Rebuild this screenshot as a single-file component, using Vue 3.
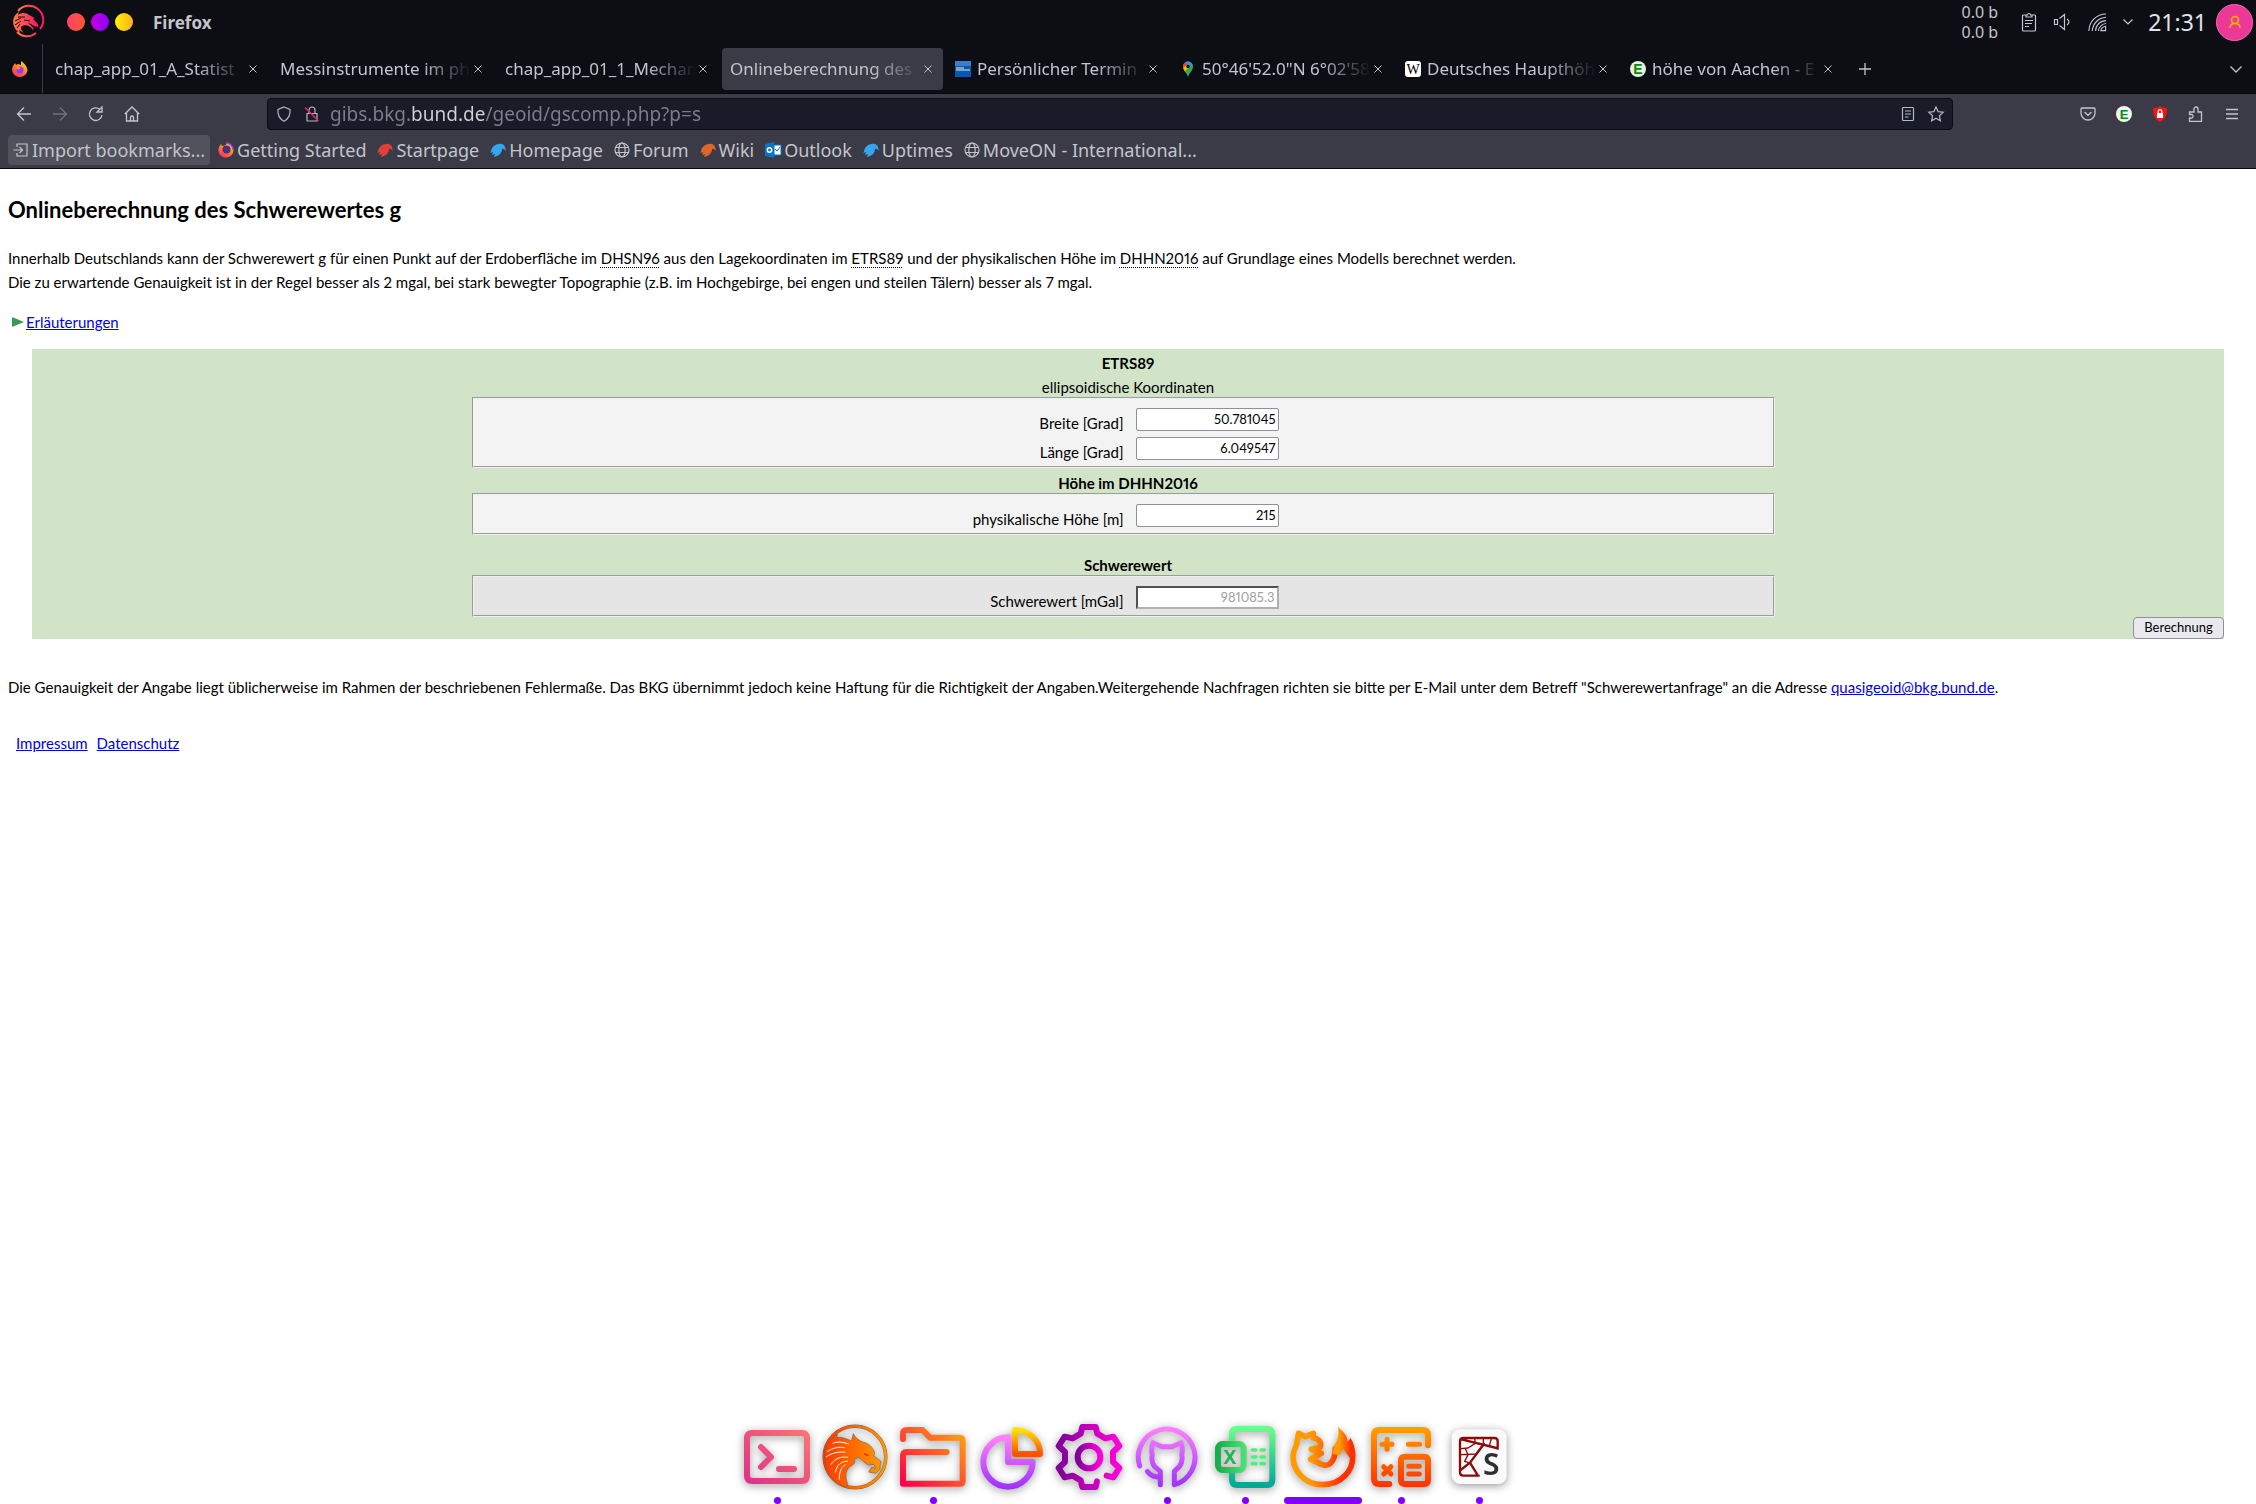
<script setup>
import { ref } from 'vue'

const tabs = [
  { title: 'chap_app_01_A_Statist' },
  { title: 'Messinstrumente im ph' },
  { title: 'chap_app_01_1_Mechan' },
  { title: 'Onlineberechnung des', active: true },
  { title: 'Persönlicher Termin', icon: 'card' },
  { title: '50°46\'52.0"N 6°02\'58', icon: 'pin' },
  { title: 'Deutsches Haupthöh', icon: 'wiki' },
  { title: 'höhe von Aachen - E', icon: 'eco' },
]

const bookmarks = [
  { label: 'Import bookmarks...', icon: 'import', raised: true },
  { label: 'Getting Started', icon: 'firefox' },
  { label: 'Startpage', icon: 'bird', color: '#e0403c' },
  { label: 'Homepage', icon: 'bird', color: '#35a5ee' },
  { label: 'Forum', icon: 'globe' },
  { label: 'Wiki', icon: 'bird', color: '#e0662c' },
  { label: 'Outlook', icon: 'outlook' },
  { label: 'Uptimes', icon: 'bird', color: '#35a5ee' },
  { label: 'MoveON - International...', icon: 'globe' },
]

const address = ref('gibs.bkg.bund.de/geoid/gscomp.php?p=s')
const breite = ref('50.781045')
const laenge = ref('6.049547')
const hoehe = ref('215')
const schwere = ref('981085.3')
</script>

<template>
  <div class="screen">
    <header class="system">
      <svg class="logo" viewBox="0 0 32 32">
        <defs>
          <linearGradient id="lg" x1="0" x2="1"><stop offset="0" stop-color="#ff7a45" /><stop offset="1" stop-color="#ff1560" /></linearGradient>
        </defs>
        <path d="M7 5A14 14 0 0 1 29 23M25 27A14 14 0 0 1 6 26" fill="none" stroke="url(#lg)" stroke-width="2" />
        <path d="M5 24C0 17 2 9 8 6L7 9C11 6 16 7 18 9L24 12L22 13L27 18L27 21L23 20L20 18L17 17C20 20 24 22 22 24C20 20 14 18 11 20C9 21 10 24 13 27L8 24L9 27Z" fill="url(#lg)" />
        <path d="M4 15L10 12M4 19L10 15M7 11L14 11M13 14L19 15M6 22L9 18" stroke="#0d0e14" stroke-width="1" />
      </svg>
      <div class="lights">
        <button class="light red" aria-label="Close"></button>
        <button class="light violet" aria-label="Minimise"></button>
        <button class="light yellow" aria-label="Maximise"></button>
      </div>
      <span class="appname">Firefox</span>
      <div class="tray">
        <div class="net"><span>0.0 b</span><span>0.0 b</span></div>
        <svg class="t-clip" viewBox="0 0 16 20"><path d="M5 3H2.500a1 1 0 0 0-1 1V18a1 1 0 0 0 1 1H13.500a1 1 0 0 0 1-1V4a1 1 0 0 0-1-1H11M5 5V3H6.500a1.500 1.500 0 0 1 3 0H11V5ZM4 8.500H12M4 11.500H11M4 14.500H8" /></svg>
        <svg class="t-sound" viewBox="0 0 18 18"><path d="M1.500 6.500H4.500V11.500H1.500ZM6.500 5.500L11.500 1.500V16.500L6.500 12.500M14 6Q18 9 14 12" /></svg>
        <svg class="t-wifi" viewBox="0 0 20 20"><path d="M1 19C1 9 9 1 19 1M4.500 19C5 11 11 5 19 4.500M8 19C8 13 13 8 19 8M11 19C11 15 15 11 19 11M13.500 18.500C14 16 16 14.500 18.500 14V18.500Z" /></svg>
        <svg class="t-chev" viewBox="0 0 12 8"><path d="M1.500 1.500L6 6L10.500 1.500" /></svg>
        <span class="clock">21:31</span>
        <span class="avatar"><svg viewBox="0 0 12 14"><circle cx="6" cy="5" r="3.500" /><path d="M1 13C1 10 3 8.500 6 8.500S11 10 11 13" /></svg></span>
      </div>
    </header>

    <nav class="tabstrip">
      <span class="pinned">
        <svg viewBox="0 0 16 16">
          <defs><linearGradient id="fx" x1="0.200" y1="1" x2="0.800" y2="0"><stop offset="0" stop-color="#ff2a6b" /><stop offset="0.500" stop-color="#ff7a2a" /><stop offset="1" stop-color="#ffe030" /></linearGradient></defs>
          <path d="M8 16A7.500 7.500 0 0 1 1 5L3 2L4 4L6 3L9 4V0C12 2 15 5 15.500 9A7.500 7.500 0 0 1 8 16Z" fill="url(#fx)" /><circle cx="8" cy="9" r="3.500" fill="#8a3df0" /><path d="M4 6C6 5 8 6 9 7L6 9Z" fill="#ff8a2a" />
        </svg>
      </span>
      <div v-for="t in tabs" :key="t.title" class="tab" :class="{ active: t.active }">
        <svg v-if="t.icon" class="fav" viewBox="0 0 16 16">
          <g v-if="t.icon === 'card'"><rect width="16" height="16" fill="#0b57a8" /><rect width="16" height="5" fill="#3c7cc8" /><path d="M1 7H9M1 9H15" stroke="#fff" stroke-width="1" opacity="0.900" /></g>
          <g v-else-if="t.icon === 'pin'"><path d="M8 16C7 12 3 10 3 5.500A5 5 0 0 1 13 5.500C13 10 9 12 8 16Z" fill="#34a853" /><path d="M3.200 7A5 5 0 0 1 5 1.500L8 5Z" fill="#ea4335" /><path d="M5 1.500A5 5 0 0 1 12.500 3.500L8 5.500Z" fill="#4285f4" /><path d="M3.200 7L6.500 4L8 7L5 10.500Z" fill="#fbbc04" /><circle cx="8" cy="5.500" r="1.700" fill="#111" /></g>
          <g v-else-if="t.icon === 'wiki'"><rect width="16" height="16" rx="3" fill="#fff" /><text x="8" y="13" text-anchor="middle" font-family="Liberation Serif, serif" font-size="14" fill="#000">W</text></g>
          <g v-else><circle cx="8" cy="8" r="8" fill="#e8f0e4" /><text x="8" y="13" text-anchor="middle" font-family="Liberation Sans, sans-serif" font-weight="bold" font-size="14" fill="#078a10">E</text></g>
        </svg>
        <button class="title">{{ t.title }}</button>
        <button class="close" aria-label="Close tab"><svg viewBox="0 0 8 8"><path d="M0.500 0.500L7.500 7.500M7.500 0.500L0.500 7.500" /></svg></button>
      </div>
      <button class="ib newtab" aria-label="New tab"><svg viewBox="0 0 12 12"><path d="M6 0V12M0 6H12" /></svg></button>
      <button class="ib alltabs" aria-label="List all tabs"><svg viewBox="0 0 12 12"><path d="M0.500 3.500L6 9L11.500 3.500" /></svg></button>
    </nav>

    <div class="toolbar">
      <div class="navbar">
        <div class="navbuttons">
          <button class="ib" aria-label="Back"><svg viewBox="0 0 16 16"><path d="M15 8H1.500M8 1.500L1.500 8L8 14.500" /></svg></button>
          <button class="ib dim" aria-label="Forward"><svg viewBox="0 0 16 16"><path d="M1 8H14.500M8 1.500L14.500 8L8 14.500" /></svg></button>
          <button class="ib" aria-label="Reload"><svg viewBox="0 0 16 16"><path d="M14 9A6.300 6.300 0 1 1 12 3.500M9 6H14V1Z" /></svg></button>
          <button class="ib" aria-label="Home"><svg viewBox="0 0 16 16"><path d="M0.800 8L8 1L15.200 8M2.500 6.500V15H13.500V6.500M6.500 15V11.500A1.500 1.500 0 0 1 9.500 11.500V15" /></svg></button>
        </div>
        <div class="urlbar">
          <svg class="u" viewBox="0 0 16 16"><path d="M8 1L14 3.500C14.500 8 13 12.500 8 15.200C3 12.500 1.500 8 2 3.500Z" /></svg>
          <svg class="u" viewBox="0 0 16 16"><path d="M3 7.500H13V15H3ZM5 7.500V4A3 3 0 0 1 11 4V7.500" /><path d="M1 1.500L14.500 15" stroke="#e22850" stroke-width="1.600" /></svg>
          <input v-model="address" class="address" type="text" aria-label="Address" />
          <svg class="u" viewBox="0 0 16 16"><path d="M3.500 1.500H12.500a1 1 0 0 1 1 1V13.500a1 1 0 0 1-1 1H3.500a1 1 0 0 1-1-1V2.500a1 1 0 0 1 1-1ZM5 5H11M5 8H11M5 11H8.500" /></svg>
          <svg class="u" viewBox="0 0 16 16"><path d="M8 1L10.100 5.600L15.200 6.200L11.400 9.700L12.400 14.800L8 12.300L3.600 14.800L4.600 9.700L0.800 6.200L5.900 5.600Z" /></svg>
        </div>
        <div class="extensions">
          <button class="ib" aria-label="Pocket"><svg viewBox="0 0 16 16"><path d="M2 2H14a1 1 0 0 1 1 1V7A7 7 0 0 1 1 7V3a1 1 0 0 1 1-1ZM4.500 6L8 9.300L11.500 6" /></svg></button>
          <button class="ib" aria-label="Ecosia"><svg viewBox="0 0 16 16"><circle cx="8" cy="8" r="8" fill="#f2f4ee" stroke="none" /><text x="8" y="13" text-anchor="middle" font-family="Liberation Sans, sans-serif" font-weight="bold" font-size="13" fill="#078a10" stroke="none">E</text></svg></button>
          <button class="ib" aria-label="Ad blocker"><svg viewBox="0 0 16 16"><path d="M8 0C10 1.500 13 2 15 2C15.500 9 13 13.500 8 16C3 13.500 0.500 9 1 2C3 2 6 1.500 8 0Z" fill="#f31414" stroke="none" /><rect x="5" y="7" width="6" height="5" fill="#fff" stroke="none" /><path d="M6.200 7V5.500A1.800 1.800 0 0 1 9.800 5.500V7" stroke="#fff" /></svg></button>
          <button class="ib" aria-label="Extensions"><svg viewBox="0 0 16 16"><path d="M1.500 6H6V3A2 2 0 0 1 10 3V6H13.500V15.300H1.500V12H4A2 2 0 0 0 4 8.500H1.500Z" /></svg></button>
          <button class="ib" aria-label="Menu"><svg viewBox="0 0 16 16"><path d="M2 3.500H14M2 8H14M2 12.500H14" /></svg></button>
        </div>
      </div>
      <div class="bookmarks">
        <a v-for="b in bookmarks" :key="b.label" href="#" class="bm" :class="{ raised: b.raised }">
          <svg viewBox="0 0 16 16">
            <g v-if="b.icon === 'import'" class="line"><path d="M4 5V2H14V14H4V11M0.500 8H9M6.500 5L9.500 8L6.500 11" /></g>
            <g v-else-if="b.icon === 'globe'" class="line"><circle cx="8" cy="8" r="7" /><ellipse cx="8" cy="8" rx="3.200" ry="7" /><path d="M1.500 5.500H14.500M1.500 10.500H14.500" /></g>
            <g v-else-if="b.icon === 'firefox'"><path d="M8 15.500A7.500 7.500 0 0 1 1 5L3 2L4 4L7 3.500L10 1C13 2 15.500 5 15.500 9A7.500 7.500 0 0 1 8 15.500Z" fill="url(#fx)" /><circle cx="8.500" cy="7.500" r="4" fill="#4a2e80" /><path d="M8 1A7 7 0 0 1 15 8" fill="none" stroke="#a03df0" stroke-width="1.500" /></g>
            <g v-else-if="b.icon === 'outlook'"><path d="M0 2L9 0V16L0 14Z" fill="#0a72c8" /><path d="M9 3H16V13H9Z" fill="#fff" stroke="#0a72c8" /><path d="M10 7L12 9L15 5" fill="none" stroke="#0a72c8" /><circle cx="4.500" cy="8" r="2.200" fill="none" stroke="#fff" stroke-width="1.500" /></g>
            <path v-else :fill="b.color" d="M1 9C2 5 5 2 9 2C13 1 16 4 15.500 9C14.500 7 13 6.500 12 7C12 11 9 14 4 15L5 12L2 13L3 10L0.500 11Z" />
          </svg>
          <span>{{ b.label }}</span>
        </a>
      </div>
    </div>

    <main class="page">
      <h1>Onlineberechnung des Schwerewertes g</h1>
      <p>
        Innerhalb Deutschlands kann der Schwerewert g für einen Punkt auf der Erdoberfläche im <abbr>DHSN96</abbr> aus den Lagekoordinaten im <abbr>ETRS89</abbr> und der physikalischen Höhe im <abbr>DHHN2016</abbr> auf Grundlage eines Modells berechnet werden.<br />
        Die zu erwartende Genauigkeit ist in der Regel besser als 2 mgal, bei stark bewegter Topographie (z.B. im Hochgebirge, bei engen und steilen Tälern) besser als 7 mgal.
      </p>
      <div class="explain">
        <svg viewBox="0 0 12 12"><path d="M0 1L12 6L0 11Z" fill="#3f9560" /></svg><a href="#">Erläuterungen</a>
      </div>

      <form class="calc" @submit.prevent>
        <h2>ETRS89</h2>
        <div class="sub">ellipsoidische Koordinaten</div>
        <div class="box">
          <div class="row"><label for="breite">Breite [Grad]</label><input id="breite" v-model="breite" type="text" /></div>
          <div class="row"><label for="laenge">Länge [Grad]</label><input id="laenge" v-model="laenge" type="text" /></div>
        </div>
        <h2>Höhe im DHHN2016</h2>
        <div class="box">
          <div class="row"><label for="hoehe">physikalische Höhe [m]</label><input id="hoehe" v-model="hoehe" type="text" /></div>
        </div>
        <h2 class="result-title">Schwerewert</h2>
        <div class="box grey">
          <div class="row"><label for="schwere">Schwerewert [mGal]</label><input id="schwere" v-model="schwere" class="result" type="text" disabled /></div>
        </div>
        <div class="actions"><button type="submit">Berechnung</button></div>
      </form>

      <p class="note">Die Genauigkeit der Angabe liegt üblicherweise im Rahmen der beschriebenen Fehlermaße. Das BKG übernimmt jedoch keine Haftung für die Richtigkeit der Angaben.Weitergehende Nachfragen richten sie bitte per E-Mail unter dem Betreff "Schwerewertanfrage" an die Adresse <a href="#">quasigeoid@bkg.bund.de</a>.</p>
      <div class="legal"><a href="#">Impressum</a><a href="#">Datenschutz</a></div>
    </main>

    <div class="dock">
      <button class="app run" aria-label="Terminal">
        <svg viewBox="0 0 198 198">
          <defs><linearGradient id="d1" x1="0" y1="1" x2="1" y2="0"><stop offset="0" stop-color="#e0308a" /><stop offset="1" stop-color="#fb7470" /></linearGradient></defs>
          <path stroke="url(#d1)" d="M25 27H173Q189 27 189 43V155Q189 171 173 171H25Q9 171 9 155V43Q9 27 25 27ZM51 69L81 99L51 129M105 135H150" />
        </svg>
      </button>
      <button class="app" aria-label="Dragon">
        <svg viewBox="-4 -4 206 206">
          <defs><linearGradient id="d2"><stop offset="0" stop-color="#ff3a00" /><stop offset="1" stop-color="#ff9800" /></linearGradient></defs>
          <circle cx="99" cy="99" r="96" stroke="#77604a" stroke-width="11" /><circle cx="99" cy="99" r="96" stroke="url(#d2)" stroke-width="8" />
          <path fill="url(#d2)" stroke="#77604a" stroke-width="2" d="M72 193C35 182 5 150 4 99C4 74 12 54 24 42L44 28L42 38C58 36 76 42 88 50L94 26C100 38 108 46 122 52C142 56 154 68 160 84L158 96L180 112L176 138L164 150L142 146L150 132L164 134L158 122L140 124C128 118 120 106 110 100L96 106C100 114 98 122 88 126C70 134 66 160 76 182Z" />
          <path stroke="#fff" stroke-width="3" d="M12 82C30 70 50 66 66 70M10 98C30 84 50 82 68 84M24 122C36 104 54 96 76 100M38 146C42 122 58 112 76 112M50 168C50 140 58 130 68 124M30 56C44 50 60 52 78 58" />
          <path stroke="#d21" stroke-width="4" d="M128 89L140 94" />
        </svg>
      </button>
      <button class="app run" aria-label="Files">
        <svg viewBox="0 0 198 198">
          <defs><linearGradient id="d3" x1="0" y1="1" x2="1" y2="0"><stop offset="0" stop-color="#ff0048" /><stop offset="1" stop-color="#ffa510" /></linearGradient></defs>
          <path stroke="url(#d3)" d="M9 45V30Q9 18 21 18H68L90 41H180Q188 41 188 50V170Q188 179 180 179H9V96Q9 84 20 84H140" />
        </svg>
      </button>
      <button class="app" aria-label="Disk usage">
        <svg viewBox="0 0 198 198">
          <defs><linearGradient id="d4" x1="0" y1="0" x2="0" y2="1"><stop offset="0" stop-color="#ff80ff" /><stop offset="1" stop-color="#a033ff" /></linearGradient><linearGradient id="d5" x1="0" y1="0" x2="0" y2="1"><stop offset="0" stop-color="#ffe000" /><stop offset="1" stop-color="#ff5000" /></linearGradient></defs>
          <path stroke="url(#d4)" d="M90 40A74 74 0 1 0 164 114H90Z" /><path stroke="url(#d5)" d="M111 19V90H186C186 50 155 19 111 19Z" />
        </svg>
      </button>
      <button class="app" aria-label="Settings">
        <svg viewBox="0 0 198 198">
          <defs><linearGradient id="d6"><stop offset="0" stop-color="#80009a" /><stop offset="1" stop-color="#ff00dc" /></linearGradient></defs>
          <path stroke="url(#d6)" d="M152 155L172 160L190 132L171 114V84L190 66L172 38L148 43L124 29L119 9H79L74 29L50 43L26 38L8 66L27 84V114L8 132L26 160L50 155L74 169L79 189H119L123 172" /><circle cx="99" cy="99" r="34" stroke="url(#d6)" />
        </svg>
      </button>
      <button class="app run" aria-label="GitHub">
        <svg viewBox="0 0 198 198">
          <path stroke="url(#d4)" stroke-width="15" d="M17 126A85 85 0 1 1 121 182V142L136 128Q148 112 143 92Q148 76 141 56L114 68H84L57 56Q50 76 55 92Q50 112 62 128L79 142V182M79 158Q56 162 40 142" />
        </svg>
      </button>
      <button class="app run" aria-label="Spreadsheet">
        <svg viewBox="0 0 198 198">
          <defs><linearGradient id="d7" x1="0" y1="0" x2="0" y2="1"><stop offset="0" stop-color="#66ff88" /><stop offset="1" stop-color="#00a896" /></linearGradient><linearGradient id="d8"><stop offset="0" stop-color="#14b04c" /><stop offset="1" stop-color="#48e070" /></linearGradient></defs>
          <path stroke="url(#d7)" d="M60 50V31Q60 15 76 15H165Q181 15 181 31V167Q181 183 165 183H76Q60 183 60 167V148" />
          <rect x="18" y="60" width="77" height="78" rx="14" stroke="url(#d8)" />
          <path stroke="#52f07a" stroke-width="11" d="M121 78H132M147 78H157M121 99H132M147 99H157M121 119H132M147 119H157" />
          <text x="54" y="120" text-anchor="middle" font-family="Noto Sans, sans-serif" font-weight="bold" font-size="58" fill="#1fb850">X</text>
        </svg>
      </button>
      <button class="app current" aria-label="Firefox">
        <svg viewBox="0 0 198 198">
          <defs><linearGradient id="d9"><stop offset="0.300" stop-color="#ff9a00" /><stop offset="0.800" stop-color="#ff3000" /></linearGradient></defs>
          <path stroke="url(#d9)" stroke-width="17" d="M187 90C194 140 152 182 98 182C40 182 2 134 11 84L20 60L26 28L46 38L70 28V42C88 44 96 58 90 70L64 76L94 88L62 106L84 116C116 138 136 110 136 74" />
          <path fill="url(#d9)" d="M144 8C166 28 174 40 172 54L182 42C196 66 200 92 192 116L178 100L166 84L160 74L148 94L128 90L132 64C144 50 148 34 144 8Z" />
        </svg>
      </button>
      <button class="app run" aria-label="Calculator">
        <svg viewBox="0 0 198 198">
          <defs><linearGradient id="d10" gradientUnits="userSpaceOnUse" x1="0" y1="10" x2="0" y2="190"><stop offset="0" stop-color="#ffa000" /><stop offset="1" stop-color="#ff3000" /></linearGradient></defs>
          <path stroke="url(#d10)" d="M180 64V34Q180 18 164 18H34Q18 18 18 34V164Q18 180 34 180H64M111 98H168Q180 98 180 110V168Q180 180 168 180H111Q99 180 99 168V110Q99 98 111 98Z" />
          <path stroke="url(#d10)" stroke-width="15" d="M57 46V76M42 61H72M121 61H155M47 128L69 150M69 128L47 150M122 127H154M122 150H154" />
        </svg>
      </button>
      <button class="app run" aria-label="Spyder">
        <svg viewBox="0 0 198 198">
          <rect x="17" y="16" width="165" height="164" rx="26" fill="#fafafa" />
          <path stroke="#8c0a0a" stroke-width="7" d="M155 74V52Q155 42 145 42H52Q42 42 42 52V145Q42 155 52 155H98M46 46L152 72M114 60L72 116L44 138M72 116L94 152" />
          <path stroke="#8c0a0a" stroke-width="4" d="M86 44L88 58L66 72L44 74M112 44V60L90 90L44 92M136 44L130 66M58 74L66 92L56 112L74 118" />
          <text x="136" y="154" text-anchor="middle" font-family="Noto Sans, sans-serif" font-weight="600" font-size="90" fill="#2f3033">S</text>
        </svg>
      </button>
    </div>
  </div>
</template>

<style>
body { background: #fff; }
</style>

<style scoped>
* { box-sizing: border-box; }
.screen { min-height: 100vh; font-family: "Noto Sans", sans-serif; font-size: 17px; color: #c3c5cc; }
button { font: inherit; color: inherit; background: none; border: 0; padding: 0; }
svg { display: block; flex: none; overflow: visible; }

.system { display: flex; align-items: center; height: 44px; padding: 0 3px 0 11px; background: #0d0e14; }
.logo { width: 32px; height: 32px; }
.lights { display: flex; gap: 6px; margin-left: 24px; }
.light { width: 18px; height: 18px; border-radius: 50%; }
.red { background: linear-gradient(90deg, #ff4468, #ff5530); }
.violet { background: linear-gradient(90deg, #c800dc, #8800ff); }
.yellow { background: linear-gradient(90deg, #fff000, #ffb020); }
.appname { margin-left: 20px; font-weight: 700; }
.tray { display: flex; align-items: center; margin-left: auto; stroke: #c3c5cc; }
.tray svg { fill: none; stroke-width: 1.200; }
.net { display: flex; flex-direction: column; margin-right: 23px; font-size: 16px; line-height: 20px; }
.t-clip { width: 16px; height: 20px; margin-right: 16px; }
.t-sound { width: 18px; height: 18px; margin-right: 17px; }
.t-wifi { width: 19px; height: 19px; margin-right: 15px; }
.t-chev { width: 12px; height: 8px; margin-right: 14px; }
.net, .clock { stroke: none; }
.clock { font-size: 23px; line-height: 32px; color: #dfe3ea; margin-right: 9px; }
.avatar { display: flex; align-items: center; justify-content: center; width: 37px; height: 37px; border-radius: 50%; background: #ec3899; border: 1px solid #f26ab4; }
.avatar svg { width: 12px; height: 14px; stroke: #ffb000; stroke-width: 1.600; }

.tabstrip { display: flex; align-items: center; gap: 4px; height: 50px; padding: 0 12px 0 0; background: #0d0e14; border-bottom: 1px solid #05060a; }
.pinned { display: flex; align-items: center; align-self: stretch; width: 43px; padding-left: 12px; border-right: 1px solid #3a3b46; }
.pinned svg { width: 16px; height: 16px; }
.tab { display: flex; align-items: center; flex: 0 1 221px; min-width: 0; height: 42px; padding: 0 11px 0 8px; border-radius: 4px; }
.tab.active { background: #3a3b46; }
.fav { width: 16px; height: 16px; margin-right: 6px; }
.title { flex: 1; min-width: 0; overflow: hidden; white-space: nowrap; text-align: left; mask-image: linear-gradient(90deg, #000 calc(100% - 50px), transparent); }
.close svg { width: 8px; height: 8px; margin-left: 3px; fill: none; stroke: #c3c5cc; }
.ib svg { fill: none; stroke: #c3c5cc; stroke-width: 1.300; width: 16px; height: 16px; }
.ib { display: flex; align-items: center; justify-content: center; width: 36px; height: 32px; flex: none; }
.newtab svg, .alltabs svg { width: 12px; height: 12px; }
.alltabs { width: 16px; margin-left: auto; }
.dim { opacity: 0.400; }

.toolbar { background: #3a3b46; padding: 4px 6px 3px; border-bottom: 1px solid #05060a; }
.navbar { display: flex; align-items: center; height: 32px; }
.navbuttons, .extensions { display: flex; flex: none; }
.urlbar { display: flex; align-items: center; flex: 1; min-width: 0; height: 32px; margin: 0 117px; padding: 0 8px; gap: 12px; background: #191c28; border: 1px solid #0b0c12; border-radius: 4px; }
.u { width: 16px; height: 16px; fill: none; stroke: #b4b7c0; stroke-width: 1.200; }
.address { flex: 1; min-width: 0; margin-left: -2px; padding: 0; border: 0; outline: 0; font: 19px "Noto Sans", sans-serif; color: transparent; background: linear-gradient(90deg, #7c7f8a 81px, #d0d2d8 81px, #d0d2d8 155px, #7c7f8a 155px); background-clip: text; -webkit-background-clip: text; }
.bookmarks { display: flex; align-items: center; gap: 1px; margin-top: 5px; padding-left: 2px; font-size: 18px; }
.bm { display: flex; align-items: center; gap: 3px; height: 30px; padding: 0 5px; border-radius: 4px; color: #c3c5cc; text-decoration: none; white-space: nowrap; }
.bm svg { width: 16px; height: 16px; }
.bm.raised { background: #50515b; margin-right: 2px; }
.line { fill: none; stroke: #c3c5cc; stroke-width: 1.200; }

.page { padding: 0 8px; font-family: Lato, sans-serif; font-size: 15px; line-height: 24px; font-variant-numeric: proportional-nums; color: #000; }
.page a { color: #0000ee; text-decoration: underline; }
h1 { margin: 25px 0 20px; font-size: 22px; line-height: 32px; font-weight: 700; }
p { margin: 0; }
abbr { text-decoration: underline dotted 1px; text-underline-offset: 3px; }
.explain { display: flex; align-items: center; gap: 2px; margin: 16px 0 15px; padding-left: 4px; }
.explain svg { width: 12px; height: 12px; }
.calc { margin: 0 24px; padding-top: 2px; background: #d1e4c8; text-align: center; }
h2 { margin: 0; font-size: 15px; line-height: 24px; font-weight: 700; }
.sub { height: 22px; }
.box { margin: 0 calc(20% + 11px) 0 calc(20% + 2px); padding: 9px 0 6px; display: flex; flex-direction: column; gap: 6px; border: 2px groove #f0f0f0; background: #f3f3f3; }
.box.grey { background: #e5e5e5; }
.box + h2 { padding-top: 3px; height: 25px; }
.box + .result-title { padding-top: 18px; height: 40px; }
.row { display: flex; gap: 12px; height: 23px; }
.row label { width: 50%; padding-top: 3px; text-align: right; }
.row input { width: 143px; height: 23px; padding: 0 2px 2px; border: 1px solid #8f8f9d; border-radius: 2px; background: #fff; font: 13px Lato, sans-serif; font-variant-numeric: proportional-nums; text-align: right; color: #000; }
.row .result { border: 2px solid; border-color: #505050 #b0b0b0 #b0b0b0 #505050; color: #a0a0a0; border-radius: 0; }
.actions { display: flex; justify-content: flex-end; }
.actions button { height: 22px; width: 91px; font-size: 13px; line-height: 18px; padding-bottom: 2px; background: #e9e9ed; border: 1px solid #8f8f9d; border-radius: 4px; color: #000; }
.note { margin-top: 36px; }
.legal { display: flex; gap: 9px; margin: 32px 8px 0; }

.dock { position: fixed; left: 0; right: 0; bottom: 0; display: flex; justify-content: center; }
.app { display: flex; flex-direction: column; align-items: center; width: 78px; height: 80px; }
.app svg { width: 66px; height: 66px; fill: none; stroke-width: 18; stroke-linecap: round; stroke-linejoin: round; filter: drop-shadow(0 2px 4px rgba(0, 0, 0, 0.400)); }
.run::after, .current::after { content: ""; width: 7px; height: 7px; margin-top: 7px; border-radius: 4px; background: #8000ff; }
.current::after { width: 78px; }
</style>
